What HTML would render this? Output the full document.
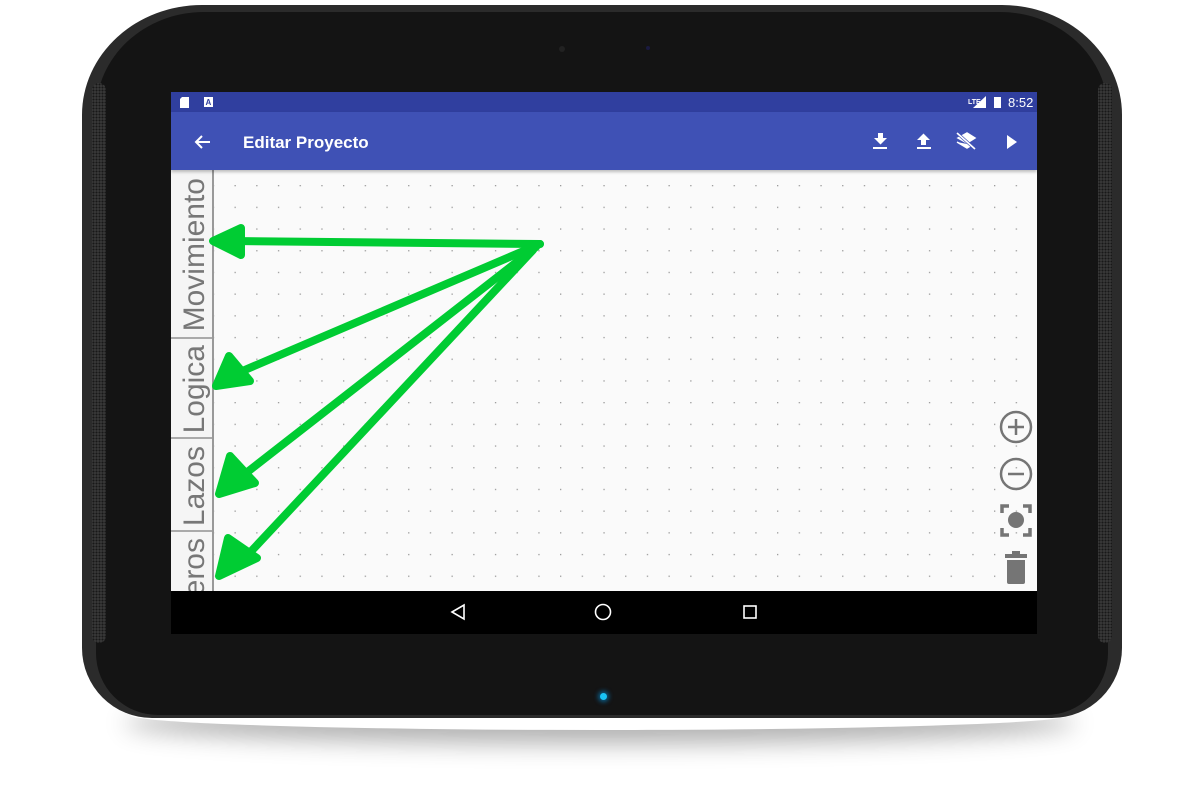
<!DOCTYPE html>
<html><head><meta charset="utf-8"><style>
html,body{margin:0;padding:0;background:#fff;width:1200px;height:797px;overflow:hidden;font-family:"Liberation Sans",sans-serif}
.shadow{position:absolute;left:130px;top:700px;width:940px;height:30px;border-radius:50%;box-shadow:0 8px 24px 6px rgba(0,0,0,.3)}
.body{position:absolute;left:82px;top:5px;width:1040px;height:713px;background:#2b2b2b;border-radius:120px 120px 70px 70px / 110px 110px 70px 70px}
.bezel{position:absolute;left:96px;top:12px;width:1012px;height:703px;background:#141414;border-radius:108px 108px 62px 62px / 100px 100px 62px 62px}
.spk{position:absolute;top:83px;width:14px;height:560px;background:#3a3a3a;border-radius:7px;background-image:radial-gradient(#181818 0.9px,transparent 1.2px);background-size:3px 3px}
.screen{position:absolute;left:171px;top:92px;width:866px;height:542px;background:#fafafa;overflow:hidden}
.status{position:absolute;left:0;top:0;width:866px;height:20px;background:#303f9f;color:#fff;font-size:12px}
.bar{position:absolute;left:0;top:20px;width:866px;height:58px;background:#3f51b5;color:#fff;box-shadow:0 2px 3px rgba(0,0,0,.25)}
.title{position:absolute;left:72px;top:21px;font-size:17px;font-weight:bold}
.nav{position:absolute;left:0;top:499px;width:866px;height:43px;background:#000}
</style></head><body>
<div class="shadow"></div>
<div class="body"></div>
<div class="bezel"></div>
<div class="spk" style="left:92px"></div>
<div class="spk" style="left:1098px"></div>
<div style="position:absolute;left:559px;top:46px;width:6px;height:6px;border-radius:50%;background:#222"></div>
<div style="position:absolute;left:646px;top:46px;width:4px;height:4px;border-radius:50%;background:#1a1a40"></div>
<div style="position:absolute;left:600px;top:693px;width:7px;height:7px;border-radius:50%;background:#19c3f5;box-shadow:0 0 5px 2px rgba(0,170,255,.5)"></div>
<div class="screen">
 <svg style="position:absolute;left:0;top:78px" width="866" height="421">
  <defs><pattern id="d" x="63.5" y="15" width="21.7" height="21.7" patternUnits="userSpaceOnUse"><rect x="0" y="0" width="1.3" height="1.3" fill="#9a9a9a"/></pattern></defs>
  <rect x="0" y="0" width="42" height="421" fill="#f5f5f5"/>
  <rect x="42" y="0" width="824" height="421" fill="url(#d)"/>
  <g font-family="Liberation Sans" font-size="30" fill="#777" text-anchor="end">
   <text x="33" y="8" transform="rotate(-90 33 8)">Movimiento</text>
   <text x="33" y="175" transform="rotate(-90 33 175)">Logica</text>
   <text x="33" y="276" transform="rotate(-90 33 276)">Lazos</text>
   <text x="33" y="368" transform="rotate(-90 33 368)">Numeros</text>
  </g>
  <g stroke="#aaa" stroke-width="2">
   <line x1="0" y1="168" x2="42" y2="168"/><line x1="0" y1="268" x2="42" y2="268"/><line x1="0" y1="361" x2="42" y2="361"/>
  </g>
  <line x1="42" y1="0" x2="42" y2="421" stroke="#999" stroke-width="2"/>
 </svg>
 <svg style="position:absolute;left:0;top:0" width="866" height="542">
  <g stroke="#00cc33" stroke-width="8" stroke-linecap="round" fill="#00cc33" stroke-linejoin="round">
   <line x1="369" y1="152" x2="60" y2="149"/>
   <line x1="369" y1="152" x2="62" y2="283"/>
   <line x1="365" y1="155" x2="70" y2="385"/>
   <line x1="362" y1="158" x2="72" y2="468"/>
   <polygon points="42,149 70,136 70,163"/>
   <polygon points="45,294 58,264 79,289"/>
   <polygon points="48,402 59,364 84,391"/>
   <polygon points="48,484 57,446 86,466"/>
  </g>
  <g fill="none" stroke="#757575" stroke-width="2.5">
   <circle cx="845" cy="335" r="15"/><path d="M837 335h16M845 327v16"/>
   <circle cx="845" cy="382" r="15"/><path d="M837 382h16"/>
   <path d="M831 421v-7h7M852 414h7v7M859 436v7h-7M838 443h-7v-7" stroke-width="3.5"/>
  </g>
  <circle cx="845" cy="428" r="8" fill="#757575"/>
  <rect x="834" y="462" width="22" height="4" fill="#757575"/><rect x="841" y="459" width="8" height="4" fill="#757575"/>
  <path d="M836 468h18v22a2 2 0 0 1-2 2h-14a2 2 0 0 1-2-2z" fill="#757575"/>
 </svg>
 <div class="status">
  <svg width="866" height="20" style="position:absolute;left:0;top:0">
   <path d="M11 5h7v11h-9v-9z" fill="#fff"/>
   <rect x="33" y="5" width="9" height="10" fill="#fff"/><text x="34.5" y="13" font-size="8" fill="#303f9f" font-weight="bold" font-family="Liberation Sans">A</text>
   <text x="797" y="12" font-size="7" fill="#fff" font-weight="bold" font-family="Liberation Sans">LTE</text>
   <path d="M802 16l13-12v12z" fill="#fff"/>
   <rect x="823" y="5" width="7" height="11" fill="#fff"/>
   <text x="837" y="15" font-size="13" fill="#fff" font-family="Liberation Sans">8:52</text>
  </svg>
 </div>
 <div class="bar">
  <svg width="866" height="58" style="position:absolute;left:0;top:0">
   <path d="M39 30h-14M31 24l-6 6 6 6" stroke="#fff" stroke-width="2" fill="none"/>
   <path d="M707 21h5v5h4l-6.5 6.5-6.5-6.5h4z M702 35h14v2h-14z" fill="#fff"/>
   <path d="M750 33h5v-5h4l-6.5-6.5-6.5 6.5h4z M746 35h14v2h-14z" fill="#fff"/>
   <path d="M787 26l9-5 8 5-8 5z M786 30l10 6 5-3" fill="#fff" stroke="#fff" stroke-width="1.5"/>
   <path d="M786 21l18 16" stroke="#3f51b5" stroke-width="3"/><path d="M786 21l18 16" stroke="#fff" stroke-width="1.6"/>
   <path d="M836 23l10 7-10 7z" fill="#fff"/>
  </svg>
  <div class="title">Editar Proyecto</div>
 </div>
 <div class="nav">
  <svg width="866" height="43" style="position:absolute;left:0;top:0">
   <g fill="none" stroke="#fff" stroke-width="1.6">
    <path d="M281 21l12-7v14z"/><circle cx="432" cy="21" r="7.5"/><rect x="573" y="15" width="12" height="12"/>
   </g>
  </svg>
 </div>
</div>
</body></html>
